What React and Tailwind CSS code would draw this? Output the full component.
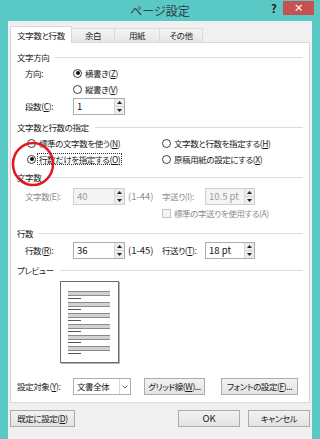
import React from 'react';

// Windows 8 style "ページ設定" dialog

function Radio({ checked }) {
  return (
    <span className="w-[9px] h-[9px] rounded-full border border-[#3c3c3c] bg-white flex items-center justify-center shrink-0">
      {checked && <span className="w-[4px] h-[4px] rounded-full bg-[#111]" />}
    </span>
  );
}

function Arrow({ up }) {
  return (
    <svg width="5" height="3" viewBox="0 0 5 3">
      {up ? <path d="M0 3 L2.5 0 L5 3 Z" fill="#222" /> : <path d="M0 0 L2.5 3 L5 0 Z" fill="#222" />}
    </svg>
  );
}

function Spin({ value, disabled, className }) {
  return (
    <div
      className={`flex h-[17px] border ${
        disabled ? 'border-[#cfcfcf] bg-[#f4f4f4] text-[#9a9a9a]' : 'border-[#abadb3] bg-white text-[#111]'
      } ${className}`}
    >
      <div className="flex-1 flex items-center pl-[3px] text-[9.5px] tracking-normal">{value}</div>
      <div className="w-[10px] flex flex-col border-l border-[#d6d6d6]">
        <div className="flex-1 flex items-center justify-center bg-[#ececec] border-b border-[#d6d6d6]">
          <Arrow up />
        </div>
        <div className="flex-1 flex items-center justify-center bg-[#ececec]">
          <Arrow />
        </div>
      </div>
    </div>
  );
}

function Section({ title, className = '' }) {
  return (
    <div className={`flex items-center h-[16px] pl-[6px] pr-[6px] ${className}`}>
      <span>{title}</span>
      <div className="flex-1 h-px bg-[#dcdcdc] ml-[6px]" />
    </div>
  );
}

function Btn({ children, className = '' }) {
  return (
    <div
      className={`h-[17px] flex items-center justify-center border border-[#acacac] bg-linear-to-b from-[#f2f2f2] to-[#e3e3e3] ${className}`}
    >
      {children}
    </div>
  );
}

function PreviewPage() {
  const groups = [0, 1, 2, 3, 4, 5];
  return (
    <div className="ml-[49px] mt-[3px] w-[59px] h-[82px] bg-white border border-[#6d6d6d] shadow-[1px_1px_0_#b5b5b5] pt-[9px] pl-[7px] flex flex-col">
      {groups.map((g) => (
        <div key={g} className="h-[11px] flex flex-col">
          <div className="w-[42px] h-[5px] border-y border-[#8a8a8a] bg-[#d2d2d2]" />
          <div className="w-[13px] h-px bg-[#555] mt-[2px]" />
        </div>
      ))}
    </div>
  );
}

export default function App() {
  return (
    <div className="relative w-[320px] h-[439px] bg-[#5ac9c5] flex flex-col overflow-hidden font-['Meiryo_UI','Noto_Sans_CJK_JP',sans-serif] text-[8.5px] leading-none tracking-[-0.4px] text-[#1a1a1a] [font-feature-settings:'palt']">
      {/* title bar */}
      <div className="relative h-[21px] shrink-0">
        <div className="absolute inset-x-0 top-[5px] text-center text-[12px] tracking-normal text-[#2f3f3f]">ページ設定</div>
        <div className="absolute left-[271px] top-[3px] text-[11px] font-bold text-[#1a1a1a]">?</div>
        <div className="absolute left-[283px] top-[1px] w-[31px] h-[14px] bg-[#c75050] flex items-center justify-center text-white text-[10px] font-bold">
          ×
        </div>
      </div>

      {/* client area */}
      <div className="mx-[8px] flex-1 bg-[#f0f0f0] flex flex-col px-[2px] pb-[6px]">
        {/* tabs */}
        <div className="h-[21px] flex items-end shrink-0">
          <div className="relative z-10 w-[62px] h-[17px] -mb-px bg-white border border-b-0 border-[#d9d9d9] flex items-center justify-center">
            文字数と行数
          </div>
          <div className="-ml-px w-[44px] h-[14px] bg-linear-to-b from-[#f4f4f4] to-[#e6e6e6] border border-b-0 border-[#d9d9d9] flex items-center justify-center">
            余白
          </div>
          <div className="-ml-px w-[46px] h-[14px] bg-linear-to-b from-[#f4f4f4] to-[#e6e6e6] border border-b-0 border-[#d9d9d9] flex items-center justify-center">
            用紙
          </div>
          <div className="-ml-px w-[44px] h-[14px] bg-linear-to-b from-[#f4f4f4] to-[#e6e6e6] border border-b-0 border-[#d9d9d9] flex items-center justify-center">
            その他
          </div>
        </div>

        {/* tab panel */}
        <div className="bg-white border border-[#d9d9d9] flex flex-col pb-[7px]">
          <Section title="文字方向" className="mt-[6px]" />
          <div className="h-[16px] flex items-center pl-[14px]">
            <span className="w-[48px]">方向:</span>
            <Radio checked />
            <span className="ml-[3px]">
              横書き(<u>Z</u>)
            </span>
          </div>
          <div className="h-[16px] flex items-center pl-[62px]">
            <Radio />
            <span className="ml-[3px]">
              縦書き(<u>V</u>)
            </span>
          </div>
          <div className="mt-[1px] h-[17px] flex items-center pl-[14px]">
            <span className="w-[48px]">
              段数(<u>C</u>):
            </span>
            <Spin value="1" className="w-[52px]" />
          </div>

          <Section title="文字数と行数の指定" className="mt-[4px]" />
          <div className="h-[16px] flex items-center pl-[16px]">
            <div className="w-[135px] flex items-center">
              <Radio />
              <span className="ml-[3px]">
                標準の文字数を使う(<u>N</u>)
              </span>
            </div>
            <Radio />
            <span className="ml-[3px]">
              文字数と行数を指定する(<u>H</u>)
            </span>
          </div>
          <div className="h-[16px] flex items-center pl-[16px]">
            <div className="w-[135px] flex items-center">
              <Radio checked />
              <span className="ml-[1px] px-[1px] py-[1px] border border-dotted border-[#333]">
                行数だけを指定する(<u>O</u>)
              </span>
            </div>
            <Radio />
            <span className="ml-[3px]">
              原稿用紙の設定にする(<u>X</u>)
            </span>
          </div>

          <Section title="文字数" className="mt-[2px]" />
          <div className="mt-[3px] h-[17px] flex items-center text-[#8d8d8d]">
            <div className="w-[151px] flex items-center pl-[14px]">
              <span className="w-[48px]">文字数(E):</span>
              <Spin value="40" disabled className="w-[52px]" />
              <span className="ml-[3px] text-[9.5px] tracking-normal">(1-44)</span>
            </div>
            <span className="w-[43px]">字送り(I):</span>
            <Spin value="10.5 pt" disabled className="w-[50px]" />
          </div>
          <div className="h-[16px] flex items-center pl-[151px] text-[#8d8d8d]">
            <span className="w-[9px] h-[9px] border border-[#c4c4c4] bg-[#f4f4f4] shrink-0" />
            <span className="ml-[3px]">標準の字送りを使用する(A)</span>
          </div>

          <Section title="行数" className="mt-[4px]" />
          <div className="mt-[1px] h-[17px] flex items-center">
            <div className="w-[151px] flex items-center pl-[14px]">
              <span className="w-[48px]">
                行数(<u>R</u>):
              </span>
              <Spin value="36" className="w-[52px]" />
              <span className="ml-[3px] text-[9.5px] tracking-normal">(1-45)</span>
            </div>
            <span className="w-[43px]">
              行送り(<u>T</u>):
            </span>
            <Spin value="18 pt" className="w-[50px]" />
          </div>

          <Section title="プレビュー" className="mt-[3px]" />
          <PreviewPage />

          <div className="mt-[15px] h-[17px] flex items-center pl-[6px]">
            <span className="w-[56px]">
              設定対象(<u>Y</u>):
            </span>
            <div className="w-[58px] h-[17px] flex border border-[#abadb3] bg-white">
              <div className="flex-1 flex items-center pl-[3px]">文書全体</div>
              <div className="w-[11px] border-l border-[#d6d6d6] flex items-center justify-center">
                <svg width="6" height="4" viewBox="0 0 6 4">
                  <path d="M0.5 0.5 L3 3 L5.5 0.5" fill="none" stroke="#666" strokeWidth="1" />
                </svg>
              </div>
            </div>
            <Btn className="ml-[13px] w-[61px]">
              グリッド線(<u>W</u>)...
            </Btn>
            <Btn className="ml-[16px] w-[77px]">
              フォントの設定(<u>F</u>)...
            </Btn>
          </div>
        </div>

        {/* bottom buttons */}
        <div className="mt-[7px] flex items-center">
          <Btn className="w-[65px]">
            既定に設定(<u>D</u>)
          </Btn>
          <Btn className="ml-[103px] w-[62px] border-[#6aa6e0] text-[9.5px] tracking-normal">OK</Btn>
          <Btn className="ml-[8px] w-[62px]">キャンセル</Btn>
        </div>
      </div>

      {/* red annotation circle */}
      <svg className="absolute left-0 top-0 pointer-events-none" width="320" height="439">
        <ellipse cx="33" cy="164" rx="20" ry="21" fill="none" stroke="#e5141d" strokeWidth="2.5" />
      </svg>
    </div>
  );
}
